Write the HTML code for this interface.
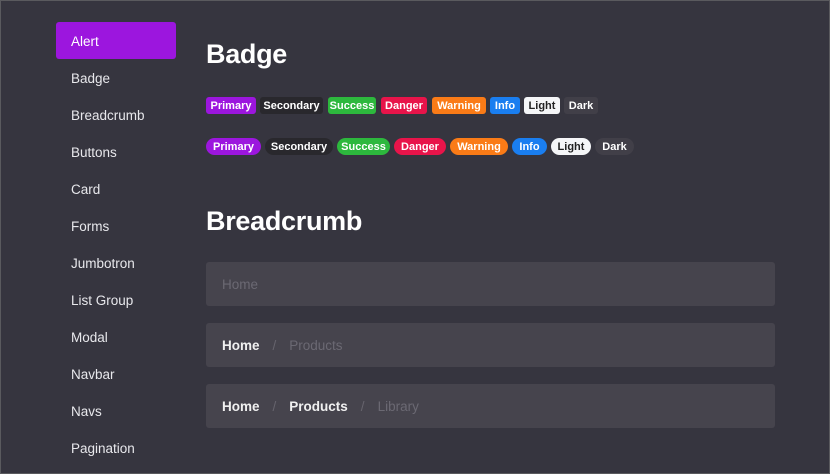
<!DOCTYPE html>
<html><head><style>
*{margin:0;padding:0;box-sizing:border-box}
body{width:830px;height:474px;background:#36353f;font-family:"Liberation Sans",sans-serif;position:relative;overflow:hidden}
.frame{position:absolute;left:0;top:0;width:830px;height:474px;border:1px solid #5a5a5e}
.nav{position:absolute;left:56px;top:22px;width:120px}
.nav div{height:37px;line-height:39px;padding-left:15px;font-size:13.5px;color:#e8e8ec}
.nav div.a{background:#9c16de;border-radius:3px;color:#fff}
h1{position:absolute;left:206px;font-size:27px;font-weight:bold;color:#fff;letter-spacing:-0.3px}
.b{position:absolute;height:17px;line-height:19px;font-size:11px;font-weight:bold;color:#fff;text-align:center;border-radius:3px}
.p{height:17px;border-radius:9px}
.bc{position:absolute;left:206px;width:569px;height:44px;background:#46444d;border-radius:3px;font-size:13.5px;line-height:46px;padding-left:16px;color:#6b6973}
.bc b{color:#f0f0f0}
.bc span.s{color:#66646d;margin:0 13px}
</style></head><body>
<div class="frame"></div>
<div class="nav">
<div class="a">Alert</div><div>Badge</div><div>Breadcrumb</div><div>Buttons</div><div>Card</div><div>Forms</div><div>Jumbotron</div><div>List Group</div><div>Modal</div><div>Navbar</div><div>Navs</div><div>Pagination</div>
</div>
<h1 style="top:39px">Badge</h1>
<div class="b" style="top:97px;left:206px;width:50px;background:#9c16de">Primary</div>
<div class="b" style="top:97px;left:260px;width:63px;background:#29282d">Secondary</div>
<div class="b" style="top:97px;left:328px;width:48px;background:#2db83d">Success</div>
<div class="b" style="top:97px;left:381px;width:46px;background:#e8144a">Danger</div>
<div class="b" style="top:97px;left:432px;width:54px;background:#fa7b17">Warning</div>
<div class="b" style="top:97px;left:490px;width:30px;background:#1a7ef0">Info</div>
<div class="b" style="top:97px;left:524px;width:36px;background:#f5f6f8;color:#222">Light</div>
<div class="b" style="top:97px;left:564px;width:34px;background:#413f48">Dark</div>
<div class="b p" style="top:138px;left:206px;width:55px;background:#9c16de">Primary</div>
<div class="b p" style="top:138px;left:265px;width:68px;background:#29282d">Secondary</div>
<div class="b p" style="top:138px;left:337px;width:53px;background:#2db83d">Success</div>
<div class="b p" style="top:138px;left:394px;width:52px;background:#e8144a">Danger</div>
<div class="b p" style="top:138px;left:450px;width:58px;background:#fa7b17">Warning</div>
<div class="b p" style="top:138px;left:512px;width:35px;background:#1a7ef0">Info</div>
<div class="b p" style="top:138px;left:551px;width:40px;background:#f5f6f8;color:#222">Light</div>
<div class="b p" style="top:138px;left:595px;width:39px;background:#413f48">Dark</div>
<h1 style="top:206px">Breadcrumb</h1>
<div class="bc" style="top:262px">Home</div>
<div class="bc" style="top:323px"><b>Home</b><span class="s">/</span>Products</div>
<div class="bc" style="top:384px"><b>Home</b><span class="s">/</span><b>Products</b><span class="s">/</span>Library</div>
</body></html>
